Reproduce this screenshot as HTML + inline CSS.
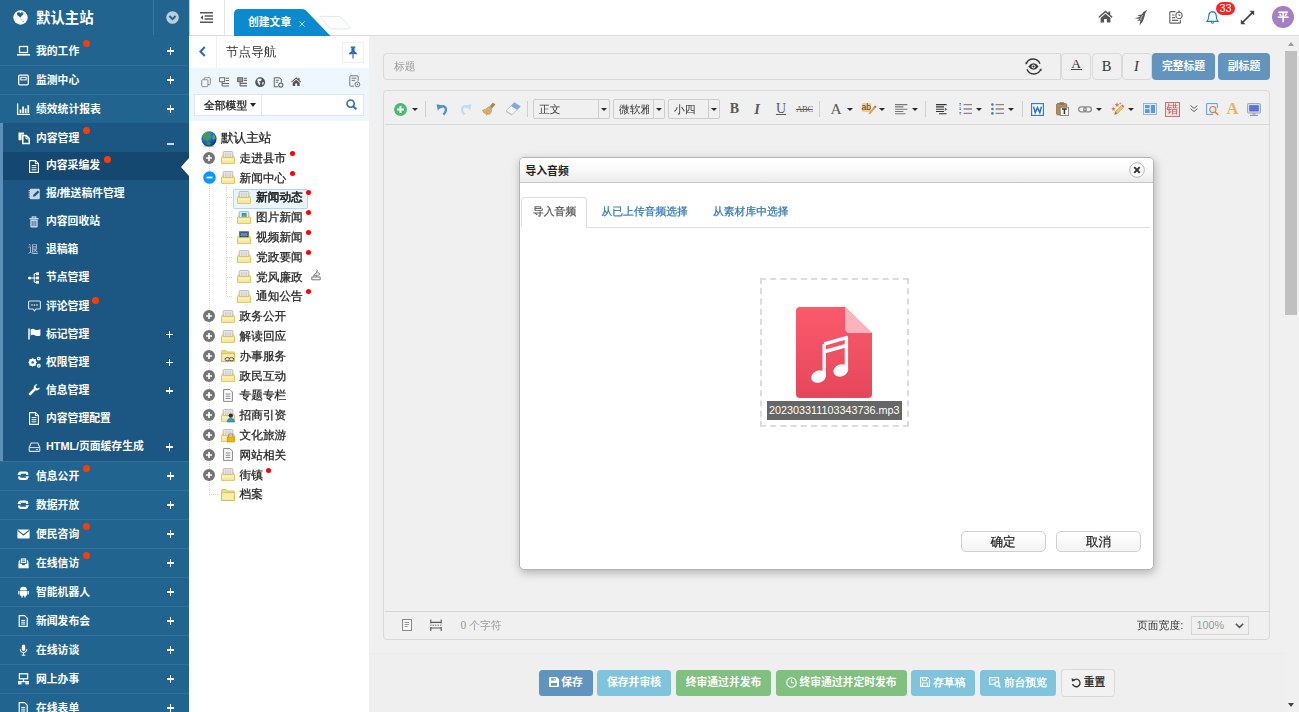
<!DOCTYPE html>
<html lang="zh-CN">
<head>
<meta charset="utf-8">
<title>创建文章</title>
<style>
*{box-sizing:border-box;margin:0;padding:0}
html,body{width:1299px;height:712px;overflow:hidden;background:#f0f0f0}
body{position:relative;font-family:"Liberation Sans","WenQuanYi Zen Hei",sans-serif;font-size:10.8px;color:#333}
.abs{position:absolute}
svg{display:block;overflow:visible;position:absolute}
.b{font-family:"Liberation Sans","Noto Sans CJK SC",sans-serif;font-weight:bold}
/* sidebar */
#side{position:absolute;left:0;top:0;width:189px;height:712px;background:#21648f;overflow:hidden}
#side .hd{position:absolute;left:0;top:0;width:189px;height:36px}
#side .hd .t{position:absolute;left:36px;top:8px;font-size:14.4px;line-height:20px;color:#fff;white-space:nowrap}
#side .hd .sep{position:absolute;left:153px;top:0;width:1px;height:35px;background:rgba(255,255,255,.12)}
.mi{position:absolute;left:0;width:189px;height:29px;border-top:1px solid rgba(255,255,255,.08);color:#fff}
.mi .tx,.si .tx{position:absolute;top:0;font-size:10.8px;white-space:nowrap;color:#fff}
.mi .tx{left:36px;line-height:28px}
.pl{position:absolute;left:166.800px;top:10.300px;width:7.400px;height:7.400px}
.pl:before{content:"";position:absolute;left:0;top:2.900px;width:7.400px;height:1.600px;background:#fff}
.pl:after{content:"";position:absolute;left:2.900px;top:0;width:1.600px;height:7.400px;background:#fff}
.mn{position:absolute;left:167px;top:19px;width:7px;height:1.600px;background:#c9d9e6}
.mi svg{left:17px;top:8px}
.si{position:absolute;left:0;width:186px;height:28.1px;color:#fff}
.si .tx{left:43px;line-height:27.400px}
.si svg{left:25px;top:7.500px}
.si .pl{left:163px}
.dot{position:absolute;width:7px;height:7px;border-radius:50%;background:#ff3d00}
#open{position:absolute;left:0;top:123px;width:189px;height:338px;background:#1b5782;border-left:3px solid #5c8fba}
#open .act{background:#154871}
/* top bar */
#top{position:absolute;left:189px;top:0;width:1110px;height:36px;background:#fff;border-bottom:1px solid #dcdcdc}
/* tree panel */
#tree{position:absolute;left:189px;top:36px;width:180px;height:676px;background:#fff}
.tr{position:absolute;left:0;height:20px;white-space:nowrap;font-size:11.7px;line-height:20px;color:#333}
.tr .tx{position:absolute;top:0}
.rd{position:absolute;width:5px;height:5px;border-radius:50%;background:#f00}
/* main */
#main{position:absolute;left:369px;top:36px;width:914px;height:676px;background:#f0f0f0}

</style>
</head>
<body>
<div id="side">
<div class="hd"><svg style="left:13px;top:10px" width="15" height="15" viewBox="0 0 15 15"><circle cx="7.5" cy="7.5" r="7.2" fill="#fff"/><path d="M4.400 2.400L6.200 2L7.200 3.200L8.600 2.200L10.400 2.600L10.200 4.400L8.400 6.200L7.600 7.800L6.200 6.600L4.600 5.600L3.800 3.800Z" fill="#21648f"/><path d="M7.400 8.400L8.600 9.400L8.200 10.200ZM9.200 10.600L10.800 11.400L10 12.200Z" fill="#21648f"/></svg><div class="t b">默认主站</div><div class="sep"></div><svg style="left:166px;top:11px" width="13" height="13" viewBox="0 0 13 13"><circle cx="6.500" cy="6.500" r="6.300" fill="#b9cfe0"/><path d="M3.400 5L6.500 8.200L9.600 5" fill="none" stroke="#21648f" stroke-width="1.900"/></svg></div>
<div class="mi" style="top:36px;border-top-color:transparent"><svg width="13" height="12" viewBox="0 0 13 12"><rect x="2.5" y="1.5" width="8" height="6" fill="none" stroke="#fff" stroke-width="1.3"/><rect x="0" y="9" width="13" height="1.6" fill="#fff"/></svg><div class="tx b">我的工作</div><div class="dot" style="left:83px;top:3px"></div><div class="pl"></div></div>
<div class="mi" style="top:65px"><svg width="13" height="12" viewBox="0 0 13 12"><rect x="1.7" y="1.2" width="9.6" height="9.6" rx="1" fill="none" stroke="#fff" stroke-width="1.3"/><rect x="3.8" y="3.3" width="5.4" height="2.6" fill="none" stroke="#fff" stroke-width="1"/></svg><div class="tx b">监测中心</div><div class="pl"></div></div>
<div class="mi" style="top:94px"><svg width="13" height="12" viewBox="0 0 13 12"><path d="M0.6 0.5V11.4H13" fill="none" stroke="#fff" stroke-width="1.3"/><rect x="2.6" y="6.5" width="1.7" height="3.6" fill="#fff"/><rect x="5.2" y="3.5" width="1.7" height="6.6" fill="#fff"/><rect x="7.8" y="5.5" width="1.7" height="4.6" fill="#fff"/><rect x="10.4" y="2.2" width="1.7" height="7.9" fill="#fff"/></svg><div class="tx b">绩效统计报表</div><div class="pl"></div></div>
<div id="open"></div>
<div class="mi" style="top:123px;border-top-color:transparent"><svg width="13" height="12" viewBox="0 0 13 12"><path d="M1.5 0.5H7V2.6H4.6V8.2H1.5Z" fill="#fff"/><path d="M5.8 3.6H9.4L12.2 6.4V11.6H5.8Z" fill="none" stroke="#fff" stroke-width="1.5"/><path d="M9 3.6V6.8H12.2" fill="none" stroke="#fff" stroke-width="1"/></svg><div class="tx b">内容管理</div><div class="dot" style="left:83px;top:3px"></div><div class="mn"></div></div>
<div class="si" style="left:3px;top:152px;background:#154871"><svg width="12" height="13" viewBox="0 0 12 13"><path d="M1.6 0.6H7.6L10.4 3.4V12.4H1.6Z" fill="none" stroke="#fff" stroke-width="1.1"/><path d="M7.4 0.8V3.6H10.2" fill="none" stroke="#fff" stroke-width="1"/><path d="M3.6 5.6H8.4M3.6 7.7H8.4M3.6 9.8H8.4" stroke="#fff" stroke-width="1"/></svg><div class="tx b">内容采编发</div><div class="dot" style="left:101px;top:4px"></div><div style="position:absolute;right:0;top:5.500px;width:0;height:0;border:9px solid transparent;border-right:8px solid #fff;border-left:0"></div></div>
<div class="si" style="left:3px;top:180.1px"><svg width="13" height="12" viewBox="0 0 13 12"><rect x="1.8" y="0.8" width="10" height="10.4" rx="1.2" fill="#c6d6e4"/><path d="M0.6 2.6H2.6M0.6 4.8H2.6M0.6 7H2.6M0.6 9.2H2.6" stroke="#c6d6e4" stroke-width="1"/><path d="M5 8.8L5.6 6.6L9.8 2.4L11.4 4L7.2 8.2Z" fill="#1b5782"/></svg><div class="tx b">报/推送稿件管理</div></div>
<div class="si" style="left:3px;top:208.2px"><svg width="12" height="12" viewBox="0 0 12 12"><path d="M1.4 2.6H10.6" stroke="#c6d6e4" stroke-width="1.3"/><path d="M4.2 2.4V0.9H7.8V2.4" fill="none" stroke="#c6d6e4" stroke-width="1.1"/><path d="M2.3 3.6H9.7V10.6Q9.7 11.6 8.7 11.6H3.3Q2.3 11.6 2.3 10.6Z" fill="#c6d6e4"/><path d="M4.2 5V10M6 5V10M7.8 5V10" stroke="#1b5782" stroke-width=".8"/></svg><div class="tx b">内容回收站</div></div>
<div class="si" style="left:3px;top:236.3px"><div style="position:absolute;left:25px;top:0;line-height:27.400px;font-size:10.800px;color:#c3d3e0">退</div><div class="tx b">退稿箱</div></div>
<div class="si" style="left:3px;top:264.4px"><svg width="12" height="12" viewBox="0 0 12 12"><circle cx="1.6" cy="6" r="1.6" fill="#fff"/><path d="M3 6H6.2M6.2 1.8V10.2M6.2 1.8H8M6.2 6H8M6.2 10.2H8" fill="none" stroke="#fff" stroke-width="1"/><rect x="8" y="0.4" width="3" height="2.8" fill="#fff"/><rect x="8" y="4.6" width="3" height="2.8" fill="#fff"/><rect x="8" y="8.8" width="3" height="2.8" fill="#fff"/></svg><div class="tx b">节点管理</div></div>
<div class="si" style="left:3px;top:292.5px"><svg width="13" height="12" viewBox="0 0 13 12"><path d="M1.6 1H11.4Q12.4 1 12.4 2V8Q12.4 9 11.4 9H8L6.5 10.8L5 9H1.6Q.6 9 .6 8V2Q.6 1 1.6 1Z" fill="none" stroke="#dbe6ef" stroke-width="1.1"/><circle cx="4" cy="5" r=".8" fill="#fff"/><circle cx="6.5" cy="5" r=".8" fill="#fff"/><circle cx="9" cy="5" r=".8" fill="#fff"/></svg><div class="tx b">评论管理</div><div class="dot" style="left:89px;top:4px"></div></div>
<div class="si" style="left:3px;top:320.6px"><svg width="13" height="12" viewBox="0 0 13 12"><path d="M1 0.4V11.6" stroke="#fff" stroke-width="1.5"/><path d="M2.6 1.4Q4.6 0.2 6.8 1.4T12.4 1.2V7.4Q9.6 8.6 7.2 7.4T2.6 7.6Z" fill="#fff"/></svg><div class="tx b">标记管理</div><div class="pl"></div></div>
<div class="si" style="left:3px;top:348.7px"><svg width="13" height="12" viewBox="0 0 13 12"><circle cx="4.6" cy="6.4" r="2.6" fill="none" stroke="#fff" stroke-width="2"/><path d="M4.6 2.2V10.6M.4 6.4H8.8M1.6 3.4L7.6 9.4M7.6 3.4L1.6 9.4" stroke="#fff" stroke-width="1.3"/><circle cx="4.6" cy="6.4" r="1.2" fill="#1b5782"/><circle cx="10.8" cy="2.6" r="1.3" fill="none" stroke="#fff" stroke-width="1.3"/><circle cx="10.8" cy="9.8" r="1.3" fill="none" stroke="#fff" stroke-width="1.3"/></svg><div class="tx b">权限管理</div><div class="pl"></div></div>
<div class="si" style="left:3px;top:376.8px"><svg width="13" height="12" viewBox="0 0 13 12"><path d="M11.8 3.4A3.2 3.2 0 0 1 7.6 6.2L3 10.9A1.3 1.3 0 0 1 1.1 9L5.8 4.4A3.2 3.2 0 0 1 9.4 .4L7.6 2.2L8.1 3.9L9.8 4.4Z" fill="#fff"/></svg><div class="tx b">信息管理</div><div class="pl"></div></div>
<div class="si" style="left:3px;top:404.9px"><svg width="12" height="13" viewBox="0 0 12 13"><path d="M1.6 0.6H7.6L10.4 3.4V12.4H1.6Z" fill="none" stroke="#fff" stroke-width="1.1"/><path d="M7.4 0.8V3.6H10.2" fill="none" stroke="#fff" stroke-width="1"/><path d="M3.6 5.6H8.4M3.6 7.7H8.4M3.6 9.8H8.4" stroke="#fff" stroke-width="1"/></svg><div class="tx b">内容管理配置</div></div>
<div class="si" style="left:3px;top:433px"><svg width="13" height="12" viewBox="0 0 13 12"><path d="M3.200 2H9.800L11.800 6.400V9.400Q11.800 10.400 10.800 10.400H2.200Q1.200 10.400 1.200 9.400V6.400Z" fill="none" stroke="#dbe6ef" stroke-width="1.100" stroke-linejoin="round"/><path d="M1.400 6.600H11.600" stroke="#dbe6ef" stroke-width="1"/><path d="M8 8.500H10" stroke="#dbe6ef" stroke-width=".9"/></svg><div class="tx b">HTML/页面缓存生成</div><div class="pl"></div></div>
<div class="mi" style="top:461px"><svg width="13" height="12" viewBox="0 0 13 12"><rect x="2.200" y="2.600" width="8" height="6.200" rx="1.300" fill="none" stroke="#fff" stroke-width="2.300"/><path d="M0 5.700H3.600M8.800 5.700H12.400" stroke="#21648f" stroke-width="1.500"/><path d="M.2 4.900L2.200 3L4.200 4.900ZM8.200 6.500L10.200 8.400L12.200 6.500Z" fill="#fff"/></svg><div class="tx b">信息公开</div><div class="dot" style="left:83px;top:3px"></div><div class="pl"></div></div>
<div class="mi" style="top:490px"><svg width="13" height="12" viewBox="0 0 13 12"><rect x="2.200" y="2.600" width="8" height="6.200" rx="1.300" fill="none" stroke="#fff" stroke-width="2.300"/><path d="M0 5.700H3.600M8.800 5.700H12.400" stroke="#21648f" stroke-width="1.500"/><path d="M.2 4.900L2.200 3L4.200 4.900ZM8.200 6.500L10.200 8.400L12.200 6.500Z" fill="#fff"/></svg><div class="tx b">数据开放</div><div class="pl"></div></div>
<div class="mi" style="top:519px"><svg width="13" height="12" viewBox="0 0 13 12"><rect x=".4" y="1.4" width="12.2" height="9.2" rx="1" fill="#fff"/><path d="M.8 2.4L6.5 7L12.2 2.4" fill="none" stroke="#21648f" stroke-width="1.1"/></svg><div class="tx b">便民咨询</div><div class="dot" style="left:83px;top:3px"></div><div class="pl"></div></div>
<div class="mi" style="top:548px"><svg width="13" height="12" viewBox="0 0 13 12"><path d="M3.800 1.400H9.200V6H3.800Z" fill="#fff"/><path d="M4.800 3H8.200M4.800 4.600H8.200" stroke="#21648f" stroke-width=".8"/><path d="M2.600 3.400L2 6.800V10.600H11V6.800L10.400 3.400" fill="none" stroke="#fff" stroke-width="1.200"/><path d="M2 6.800H4.600L5.400 8.200H7.600L8.400 6.800H11V10.600H2Z" fill="#fff"/></svg><div class="tx b">在线信访</div><div class="dot" style="left:83px;top:3px"></div><div class="pl"></div></div>
<div class="mi" style="top:577px"><svg width="13" height="12" viewBox="0 0 13 12"><path d="M3 4.2A3.5 3.4 0 0 1 10 4.2Z" fill="#fff"/><rect x="3" y="4.8" width="7" height="5" rx=".8" fill="#fff"/><rect x="1.2" y="4.8" width="1.3" height="3.8" rx=".6" fill="#fff"/><rect x="10.5" y="4.8" width="1.3" height="3.8" rx=".6" fill="#fff"/><rect x="4.3" y="9" width="1.4" height="2.6" rx=".6" fill="#fff"/><rect x="7.3" y="9" width="1.4" height="2.6" rx=".6" fill="#fff"/></svg><div class="tx b">智能机器人</div><div class="pl"></div></div>
<div class="mi" style="top:606px"><svg width="13" height="12" viewBox="0 0 13 12"><path d="M2.2 .6H7.6L10.2 3.2V11.4H2.2Z" fill="none" stroke="#fff" stroke-width="1.2"/><path d="M4.2 5.4H8.2M4.2 7.2H8.2M4.2 9H8.2" stroke="#fff" stroke-width="1"/></svg><div class="tx b">新闻发布会</div><div class="pl"></div></div>
<div class="mi" style="top:635px"><svg width="13" height="12" viewBox="0 0 13 12"><rect x="4.8" y=".4" width="3.4" height="6.6" rx="1.7" fill="#fff"/><path d="M3.2 5.2Q3.2 8.6 6.5 8.6T9.8 5.2M6.5 8.6V11M4.6 11.2H8.4" fill="none" stroke="#fff" stroke-width="1"/></svg><div class="tx b">在线访谈</div><div class="pl"></div></div>
<div class="mi" style="top:664px"><svg width="13" height="12" viewBox="0 0 13 12"><rect x="2.4" y=".8" width="8.2" height="5" fill="none" stroke="#fff" stroke-width="1.3"/><path d="M6.5 6V8.4M1 8.6H12" stroke="#fff" stroke-width="1.2"/><rect x="1" y="9.2" width="3.6" height="2.2" fill="#fff"/><rect x="8.4" y="9.2" width="3.6" height="2.2" fill="#fff"/></svg><div class="tx b">网上办事</div><div class="pl"></div></div>
<div class="mi" style="top:693px"><svg width="13" height="12" viewBox="0 0 13 12"><path d="M2.2 .6H7.6L10.2 3.2V11.4H2.2Z" fill="none" stroke="#fff" stroke-width="1.2"/><path d="M4.2 5.4H8.2M4.2 7.2H8.2M4.2 9H8.2" stroke="#fff" stroke-width="1"/></svg><div class="tx b">在线表单</div><div class="pl"></div></div>
</div>
<div id="top">
 <svg style="left:11px;top:12px" width="13" height="11" viewBox="0 0 13 11"><path d="M0 .8H13M4.6 4H13M4.6 7H13M0 10.2H13" stroke="#555" stroke-width="1.4"/><path d="M3 3.2V7.8L.4 5.5Z" fill="#555"/></svg>
 <div class="abs" style="left:35px;top:0;width:1px;height:35px;background:#e4e4e4"></div>
 <svg style="left:45px;top:9px" width="98" height="27" viewBox="0 0 98 27"><path d="M0 27V5Q0 0 5 0H68.5Q70.5 0 72 1.6L96.5 27Z" fill="#0b8acf"/><path d="M86 7.400H104.500Q106 7.400 107 8.400L114.500 16.400Q117.500 20 113 20H98.500Q97 20 95.500 18.600L88 10.400Q85 7.400 89 7.400Z" fill="#fbfdff" stroke="#dcebf7" stroke-width="1"/></svg>
 <div class="abs b" style="left:59px;top:13px;line-height:18px;font-size:10.8px;color:#fff;white-space:nowrap">创建文章</div>
 <svg style="left:110px;top:20.500px" width="6" height="6" viewBox="0 0 7 7"><path d="M.5 .5L6.500 6.500M6.500 .5L.5 6.500" stroke="#d6ecf8" stroke-width="1"/></svg>
 <!-- right icons -->
 <svg style="left:908.500px;top:10px" width="15" height="13" viewBox="0 0 15 13"><path d="M7.500 .6L.4 6.800L1.300 7.800L7.500 2.600L13.700 7.800L14.600 6.800L12.200 4.700V1.400H10.400V3.100Z" fill="#555"/><path d="M7.500 3.800L2.600 7.900V12.600H6.100V9H8.900V12.600H12.400V7.900Z" fill="#555"/></svg>
 <svg style="left:945px;top:9px" width="14" height="17" viewBox="0 0 14 17"><path d="M13.400 .4Q9.500 2.200 7.600 5.600L3.400 6.200L6.400 7.600L.6 9.600L5.800 9.800L3 12L6.400 11.600L5.600 16.400Q9.800 12 10.600 7.200Q11.200 3.200 13.400 .4Z" fill="#555"/><path d="M8.800 6.200Q6.500 8.500 6.800 11" stroke="#fff" stroke-width=".7" fill="none"/></svg>
 <svg style="left:980px;top:10px" width="14" height="14" viewBox="0 0 14 14"><path d="M6.500 1.600H1.600Q.8 1.600 .8 2.400V12.400Q.8 13.200 1.600 13.200H10.600Q11.400 13.200 11.400 12.400V9.800" fill="none" stroke="#666" stroke-width="1.200"/><path d="M3 5H5.600M3 7.600H6.200M3 10.400H9.200" stroke="#666" stroke-width="1.100"/><circle cx="10" cy="5.400" r="3.100" fill="none" stroke="#666" stroke-width="1.100"/><path d="M10 3.800V5.600H11.400M9 1.200H11" stroke="#666" stroke-width="1" fill="none"/></svg>
 <svg style="left:1017px;top:9.500px" width="13" height="15" viewBox="0 0 15 16"><path d="M7.500 1.200Q3.300 1.600 3.100 6.600Q3.100 10.400 1.200 12.400H13.800Q11.900 10.400 11.900 6.600Q11.700 1.600 7.500 1.200Z" fill="none" stroke="#1a7fc6" stroke-width="1.300"/><path d="M5.900 13.600Q7.500 15.600 9.100 13.600" fill="none" stroke="#1a7fc6" stroke-width="1.200"/></svg>
 <div class="abs" style="left:1027px;top:2px;width:19px;height:13px;border-radius:7px;background:#f8222a;color:#fff;font-size:10.8px;line-height:13px;text-align:center;font-family:'Liberation Sans',sans-serif">33</div>
 <svg style="left:1051px;top:10px" width="15" height="15" viewBox="0 0 15 15"><path d="M2.400 12.600L12.600 2.400" stroke="#444" stroke-width="1.700"/><path d="M9.400 .8H14.200V5.600Z" fill="#444"/><path d="M5.600 14.200H.8V9.400Z" fill="#444"/></svg>
 <div class="abs" style="left:1083px;top:6px;width:22px;height:22px;border-radius:50%;background:#a47fc2"></div>
 <div class="abs b" style="left:1083px;top:6px;width:22px;line-height:22px;text-align:center;color:#fff;font-size:11.700px">平</div>
</div>

<div id="edge" class="abs" style="left:189px;top:0;width:1px;height:712px;background:#bccfde"></div>
<div class="abs" style="left:189px;top:123px;width:1px;height:338px;background:#b5c8d8"></div>

<div id="tree">
<svg style="left:10px;top:10px" width="7" height="11" viewBox="0 0 7 11"><path d="M5.800 1L1.400 5.500L5.800 10" fill="none" stroke="#2a6db5" stroke-width="2"/></svg>
<div class="abs" style="left:27px;top:0;width:1px;height:32px;background:#eef1f4"></div>
<div class="abs" style="left:37px;top:6px;font-size:12.600px;line-height:20px;color:#333;white-space:nowrap">节点导航</div>
<div class="abs" style="left:153px;top:5.500px;width:21.500px;height:21.500px;border:1px solid #eaf0f5;background:#fff"></div>
<svg style="left:159px;top:10px" width="10" height="13" viewBox="0 0 10 13"><path d="M2.600 .4H7.400V1.400L6.600 2V5.200Q9 6.200 9.200 8.200H.8Q1 6.200 3.400 5.200V2L2.600 1.400Z" fill="#2a6db5"/><path d="M5 8.200V12.600" stroke="#2a6db5" stroke-width="1.200"/></svg>
<div class="abs" style="left:0;top:32px;width:180px;height:53px;background:#eef7fd"></div>
<svg style="left:11.8px;top:40.6px" width="10.400" height="10.400" viewBox="0 0 11.400 11.400"><rect x="3.400" y=".8" width="6.800" height="7.600" rx="1" fill="#eef7fd" stroke="#777" stroke-width=".9"/><rect x=".8" y="3" width="6.800" height="7.600" rx="1" fill="#eef7fd" stroke="#777" stroke-width=".9"/></svg>
<svg style="left:30.3px;top:40.6px" width="10.400" height="10.400" viewBox="0 0 11.400 11.400"><rect x=".6" y=".8" width="5.600" height="4.400" fill="none" stroke="#666" stroke-width="1"/><path d="M7.400 1.400H11M7.400 3.800H11M3.400 5.200V9.800M3.400 7H11M3.400 9.800H11" stroke="#666" stroke-width="1.100" fill="none"/></svg>
<svg style="left:48.3px;top:40.6px" width="10.400" height="10.400" viewBox="0 0 11.400 11.400"><rect x=".6" y=".8" width="5.600" height="4.400" fill="#999" stroke="#666" stroke-width="1"/><path d="M7.400 1.400H11M7.400 3.800H11M3.400 5.200V9.800M3.400 7H11M3.400 9.800H11" stroke="#666" stroke-width="1.300" fill="none"/></svg>
<svg style="left:66.3px;top:40.6px" width="10.400" height="10.400" viewBox="0 0 11.400 11.400"><circle cx="5.700" cy="5.700" r="5.400" fill="#555"/><path d="M4.400 1.600L6.800 2L7.400 3.400L6 4.600L5 4.400L4.600 5.400L5.800 6.400L5.400 8.200L4.400 9.400L4 7.400L2.800 6.200L3 4.200L2 3.600Q2.800 2.200 4.400 1.600ZM8.400 5.400L9.800 5.800Q9.600 7.800 8 9L7.800 7.200Z" fill="#eef7fd"/></svg>
<svg style="left:84.3px;top:40.6px" width="10.400" height="10.400" viewBox="0 0 11.400 11.400"><path d="M1.400 .8H7L9.200 3V6M5.600 10.600H1.400V.8" fill="none" stroke="#666" stroke-width="1.100"/><path d="M3 3.600H6.600M3 5.800H5.600" stroke="#666" stroke-width="1"/><circle cx="8.600" cy="8.800" r="2.300" fill="none" stroke="#555" stroke-width="1.100"/></svg>
<svg style="left:102.3px;top:40.6px" width="10.400" height="10.400" viewBox="0 0 11.400 11.400"><path d="M5.700 .4L.2 5.200L.9 6L5.700 2L10.500 6L11.200 5.200L9.400 3.600V1H8V2.400Z" fill="#555"/><path d="M5.700 3L1.900 6.200V10H4.600V7.200H6.800V10H9.500V6.200Z" fill="#555"/></svg>
<svg style="left:160px;top:39.4px" width="11.4" height="12.4" viewBox="0 0 11.4 12.4"><path d="M9.200 6V1.600Q9.200 .8 8.400 .8H1.600Q.8 .8 .8 1.600V10.400Q.8 11.200 1.600 11.200H5" fill="none" stroke="#777" stroke-width="1"/><path d="M2.600 3.200H7.400M2.600 5.400H6" stroke="#777" stroke-width="1"/><circle cx="8.400" cy="9.400" r="2.400" fill="none" stroke="#777" stroke-width="1"/><circle cx="8.400" cy="9.400" r=".8" fill="#777"/></svg>
<div class="abs" style="left:5px;top:57.500px;width:170px;height:22.500px;background:#fff;border:1px solid #dfe6ec"></div>
<div class="abs" style="left:72px;top:57.500px;width:1px;height:22.500px;background:#dfe6ec"></div>
<div class="abs" style="left:15px;top:59px;font-size:10.800px;line-height:20px;color:#222;-webkit-text-stroke:.3px #222;white-space:nowrap">全部模型</div>
<div class="abs" style="left:60.500px;top:67px;width:0;height:0;border:3.800px solid transparent;border-top:4.200px solid #222;border-bottom:0"></div>
<svg style="left:157px;top:63px" width="11" height="11" viewBox="0 0 11 11"><circle cx="4.600" cy="4.600" r="3.600" fill="none" stroke="#2a6db5" stroke-width="1.600"/><path d="M7.200 7.200L10.400 10.400" stroke="#2a6db5" stroke-width="2"/></svg>
<div class="abs" style="left:20px;top:110px;width:1px;height:348.4px;background:repeating-linear-gradient(to bottom,#d4d4d4 0,#d4d4d4 1px,transparent 1px,transparent 2px)"></div>
<div class="abs" style="left:20px;top:458.4px;height:1px;width:10px;background:repeating-linear-gradient(to right,#d4d4d4 0,#d4d4d4 1px,transparent 1px,transparent 2px)"></div>
<div class="abs" style="left:37px;top:150.6px;width:1px;height:109.8px;background:repeating-linear-gradient(to bottom,#d4d4d4 0,#d4d4d4 1px,transparent 1px,transparent 2px)"></div>
<div class="abs" style="left:38px;top:161.4px;height:1px;width:6px;background:repeating-linear-gradient(to right,#d4d4d4 0,#d4d4d4 1px,transparent 1px,transparent 2px)"></div>
<div class="abs" style="left:38px;top:181.2px;height:1px;width:6px;background:repeating-linear-gradient(to right,#d4d4d4 0,#d4d4d4 1px,transparent 1px,transparent 2px)"></div>
<div class="abs" style="left:38px;top:201px;height:1px;width:6px;background:repeating-linear-gradient(to right,#d4d4d4 0,#d4d4d4 1px,transparent 1px,transparent 2px)"></div>
<div class="abs" style="left:38px;top:220.8px;height:1px;width:6px;background:repeating-linear-gradient(to right,#d4d4d4 0,#d4d4d4 1px,transparent 1px,transparent 2px)"></div>
<div class="abs" style="left:38px;top:240.6px;height:1px;width:6px;background:repeating-linear-gradient(to right,#d4d4d4 0,#d4d4d4 1px,transparent 1px,transparent 2px)"></div>
<div class="abs" style="left:38px;top:260.4px;height:1px;width:6px;background:repeating-linear-gradient(to right,#d4d4d4 0,#d4d4d4 1px,transparent 1px,transparent 2px)"></div>
<svg style="left:12px;top:95px" width="16" height="16" viewBox="0 0 16 16"><defs><radialGradient id="gl" cx=".35" cy=".3" r=".8"><stop offset="0" stop-color="#5aa6f0"/><stop offset=".6" stop-color="#1659c0"/><stop offset="1" stop-color="#0a2f80"/></radialGradient></defs><ellipse cx="8" cy="15" rx="5.500" ry="1" fill="#bbb"/><circle cx="8" cy="7.800" r="7.600" fill="url(#gl)"/><path d="M3 3.400Q5.600 1 8.400 1.600L9.400 3.400L7.400 5.600L8.600 7.800L6.600 10.200L4.600 8.200L3.400 8.600L1.800 6.200Z" fill="#3da33a"/><path d="M11.400 2.600Q14.400 4.400 14.600 7.600L12.600 9L11 6.600L12 4.600Z" fill="#4bb040"/><path d="M4.600 11.400L7.600 11L10 12.600L8.600 14.600Q6 14.400 4.600 11.400Z" fill="#2e9a36"/></svg>
<div class="abs" style="left:32px;top:92px;font-size:12.600px;line-height:20px;white-space:nowrap;color:#222;-webkit-text-stroke:.25px #222">默认主站</div>
<svg style="left:14.2px;top:115.8px" width="12" height="12" viewBox="0 0 12 12"><circle cx="6" cy="6" r="6" fill="#747474"/><path d="M3 6H9M6 3V9" stroke="#fff" stroke-width="1.700"/></svg>
<svg style="left:32px;top:115.3px" width="14" height="13" viewBox="0 0 14 13"><path d="M2.2 6.500V1.400Q2.200 .6 3 .6H11Q11.800 .6 11.800 1.400V6.500Z" fill="#f6f6f6" stroke="#a8a8a8" stroke-width=".8"/><path d="M4.200 1.600V6M6 1.600V6M8 1.600V6M9.800 1.600V6" stroke="#b4b4b4" stroke-width=".8"/><path d="M.5 6.600L2 4.600V6.600H12V4.600L13.500 6.600V12.400H.5Z" fill="#f7eaa6" stroke="#dcbf55" stroke-width=".9" stroke-linejoin="round"/><path d="M1 8.200H13" stroke="#fdf6cf" stroke-width="1"/></svg>
<div class="abs" style="left:50.5px;top:111.8px;font-size:11.700px;line-height:20px;white-space:nowrap;color:#222;-webkit-text-stroke:.25px #222">走进县市</div>
<div class="rd" style="left:100.8px;top:114.8px"></div>
<svg style="left:13.7px;top:135.1px" width="13" height="13" viewBox="0 0 13 13"><circle cx="6.500" cy="6.500" r="6.300" fill="#0d96fb"/><path d="M3.500 6.500H9.500" stroke="#fff" stroke-width="1.700"/></svg>
<svg style="left:32px;top:135.1px" width="14" height="13" viewBox="0 0 14 13"><path d="M2.2 6.500V1.400Q2.200 .6 3 .6H11Q11.800 .6 11.800 1.400V6.500Z" fill="#f6f6f6" stroke="#a8a8a8" stroke-width=".8"/><path d="M4.200 1.600V6M6 1.600V6M8 1.600V6M9.800 1.600V6" stroke="#b4b4b4" stroke-width=".8"/><path d="M.5 6.600L2 4.600V6.600H12V4.600L13.500 6.600V12.400H.5Z" fill="#f7eaa6" stroke="#dcbf55" stroke-width=".9" stroke-linejoin="round"/><path d="M1 8.200H13" stroke="#fdf6cf" stroke-width="1"/></svg>
<div class="abs" style="left:50.5px;top:131.6px;font-size:11.700px;line-height:20px;white-space:nowrap;color:#222;-webkit-text-stroke:.25px #222">新闻中心</div>
<div class="rd" style="left:100.8px;top:134.6px"></div>
<div class="abs" style="left:44px;top:153.1px;width:75px;height:20px;background:#eaf4fb;border:1.300px solid #abd8f3;border-radius:1.500px"></div>
<svg style="left:48px;top:154.9px" width="14" height="13" viewBox="0 0 14 13"><path d="M2.2 6.500V1.400Q2.200 .6 3 .6H11Q11.800 .6 11.800 1.400V6.500Z" fill="#f6f6f6" stroke="#a8a8a8" stroke-width=".8"/><path d="M4.200 1.600V6M6 1.600V6M8 1.600V6M9.800 1.600V6" stroke="#b4b4b4" stroke-width=".8"/><path d="M.5 6.600L2 4.600V6.600H12V4.600L13.500 6.600V12.400H.5Z" fill="#f7eaa6" stroke="#dcbf55" stroke-width=".9" stroke-linejoin="round"/><path d="M1 8.200H13" stroke="#fdf6cf" stroke-width="1"/></svg>
<div class="abs" style="left:67px;top:151.4px;font-size:11.700px;line-height:20px;white-space:nowrap;color:#222;-webkit-text-stroke:.55px #222">新闻动态</div>
<div class="rd" style="left:117.3px;top:154.4px"></div>
<svg style="left:48px;top:174.7px" width="14" height="13" viewBox="0 0 14 13"><path d="M2.2 6.500V1.400Q2.200 .6 3 .6H11Q11.800 .6 11.800 1.400V6.500Z" fill="#dfeefa" stroke="#8aa4bd" stroke-width=".8"/><rect x="4.600" y="2" width="5" height="4" fill="#3f8fd6"/><path d="M4.600 6L6.600 3.600L8 5L9.600 4V6Z" fill="#6fbf4a"/><path d="M.5 6.600L2 4.600V6.600H12V4.600L13.500 6.600V12.400H.5Z" fill="#f7eaa6" stroke="#dcbf55" stroke-width=".9" stroke-linejoin="round"/><path d="M1 8.200H13" stroke="#fdf6cf" stroke-width="1"/></svg>
<div class="abs" style="left:67px;top:171.2px;font-size:11.700px;line-height:20px;white-space:nowrap;color:#222;-webkit-text-stroke:.25px #222">图片新闻</div>
<div class="rd" style="left:117.3px;top:174.2px"></div>
<svg style="left:48px;top:194.5px" width="14" height="13" viewBox="0 0 14 13"><rect x="2.200" y=".4" width="9.600" height="6.400" fill="#333"/><rect x="3.800" y="1.600" width="6.400" height="3.800" fill="#4f8fd9"/><path d="M2.800 1.200H3.400M2.800 2.800H3.400M2.800 4.400H3.400M10.600 1.200H11.200M10.600 2.800H11.200M10.600 4.400H11.200" stroke="#fff" stroke-width=".7"/><path d="M.5 6.600L2 4.600V6.600H12V4.600L13.500 6.600V12.400H.5Z" fill="#f7eaa6" stroke="#dcbf55" stroke-width=".9" stroke-linejoin="round"/><path d="M1 8.200H13" stroke="#fdf6cf" stroke-width="1"/></svg>
<div class="abs" style="left:67px;top:191px;font-size:11.700px;line-height:20px;white-space:nowrap;color:#222;-webkit-text-stroke:.25px #222">视频新闻</div>
<div class="rd" style="left:117.3px;top:194px"></div>
<svg style="left:48px;top:214.3px" width="14" height="13" viewBox="0 0 14 13"><path d="M2.2 6.500V1.400Q2.200 .6 3 .6H11Q11.800 .6 11.800 1.400V6.500Z" fill="#f6f6f6" stroke="#a8a8a8" stroke-width=".8"/><path d="M4.200 1.600V6M6 1.600V6M8 1.600V6M9.800 1.600V6" stroke="#b4b4b4" stroke-width=".8"/><path d="M.5 6.600L2 4.600V6.600H12V4.600L13.500 6.600V12.400H.5Z" fill="#f7eaa6" stroke="#dcbf55" stroke-width=".9" stroke-linejoin="round"/><path d="M1 8.200H13" stroke="#fdf6cf" stroke-width="1"/></svg>
<div class="abs" style="left:67px;top:210.8px;font-size:11.700px;line-height:20px;white-space:nowrap;color:#222;-webkit-text-stroke:.25px #222">党政要闻</div>
<div class="rd" style="left:117.3px;top:213.8px"></div>
<svg style="left:48px;top:234.1px" width="14" height="13" viewBox="0 0 14 13"><path d="M2.2 6.500V1.400Q2.200 .6 3 .6H11Q11.800 .6 11.800 1.400V6.500Z" fill="#f6f6f6" stroke="#a8a8a8" stroke-width=".8"/><path d="M4.200 1.600V6M6 1.600V6M8 1.600V6M9.800 1.600V6" stroke="#b4b4b4" stroke-width=".8"/><path d="M.5 6.600L2 4.600V6.600H12V4.600L13.500 6.600V12.400H.5Z" fill="#f7eaa6" stroke="#dcbf55" stroke-width=".9" stroke-linejoin="round"/><path d="M1 8.200H13" stroke="#fdf6cf" stroke-width="1"/></svg>
<div class="abs" style="left:67px;top:230.6px;font-size:11.700px;line-height:20px;white-space:nowrap;color:#222;-webkit-text-stroke:.25px #222">党风廉政</div>
<svg style="left:122.3px;top:233.1px" width="10" height="11.4" viewBox="0 0 10 11.4"><path d="M.8 8V10.800H9.200V8M.8 8H9.200" fill="none" stroke="#777" stroke-width="1"/><path d="M2.400 7.400Q3 4.400 5.600 4V2.200L9 5L5.600 7.600V6Q3.800 6 2.400 7.400Z" fill="#f4f4f4" stroke="#777" stroke-width=".9" stroke-linejoin="round"/><path d="M5.400 .6L7 1.800" stroke="#777" stroke-width=".8"/></svg>
<svg style="left:48px;top:253.9px" width="14" height="13" viewBox="0 0 14 13"><path d="M2.2 6.500V1.400Q2.200 .6 3 .6H11Q11.800 .6 11.800 1.400V6.500Z" fill="#f6f6f6" stroke="#a8a8a8" stroke-width=".8"/><path d="M4.200 1.600V6M6 1.600V6M8 1.600V6M9.800 1.600V6" stroke="#b4b4b4" stroke-width=".8"/><path d="M.5 6.600L2 4.600V6.600H12V4.600L13.500 6.600V12.400H.5Z" fill="#f7eaa6" stroke="#dcbf55" stroke-width=".9" stroke-linejoin="round"/><path d="M1 8.200H13" stroke="#fdf6cf" stroke-width="1"/></svg>
<div class="abs" style="left:67px;top:250.4px;font-size:11.700px;line-height:20px;white-space:nowrap;color:#222;-webkit-text-stroke:.25px #222">通知公告</div>
<div class="rd" style="left:117.3px;top:253.4px"></div>
<svg style="left:14.2px;top:274.2px" width="12" height="12" viewBox="0 0 12 12"><circle cx="6" cy="6" r="6" fill="#747474"/><path d="M3 6H9M6 3V9" stroke="#fff" stroke-width="1.700"/></svg>
<svg style="left:32px;top:273.7px" width="14" height="13" viewBox="0 0 14 13"><path d="M2.2 6.500V1.400Q2.200 .6 3 .6H11Q11.800 .6 11.800 1.400V6.500Z" fill="#f6f6f6" stroke="#a8a8a8" stroke-width=".8"/><path d="M4.200 1.600V6M6 1.600V6M8 1.600V6M9.800 1.600V6" stroke="#b4b4b4" stroke-width=".8"/><path d="M.5 6.600L2 4.600V6.600H12V4.600L13.500 6.600V12.400H.5Z" fill="#f7eaa6" stroke="#dcbf55" stroke-width=".9" stroke-linejoin="round"/><path d="M1 8.200H13" stroke="#fdf6cf" stroke-width="1"/></svg>
<div class="abs" style="left:50.5px;top:270.2px;font-size:11.700px;line-height:20px;white-space:nowrap;color:#222;-webkit-text-stroke:.25px #222">政务公开</div>
<svg style="left:14.2px;top:294px" width="12" height="12" viewBox="0 0 12 12"><circle cx="6" cy="6" r="6" fill="#747474"/><path d="M3 6H9M6 3V9" stroke="#fff" stroke-width="1.700"/></svg>
<svg style="left:32px;top:293.5px" width="14" height="13" viewBox="0 0 14 13"><path d="M2.2 6.500V1.400Q2.200 .6 3 .6H11Q11.800 .6 11.800 1.400V6.500Z" fill="#f6f6f6" stroke="#a8a8a8" stroke-width=".8"/><path d="M4.200 1.600V6M6 1.600V6M8 1.600V6M9.800 1.600V6" stroke="#b4b4b4" stroke-width=".8"/><path d="M.5 6.600L2 4.600V6.600H12V4.600L13.500 6.600V12.400H.5Z" fill="#f7eaa6" stroke="#dcbf55" stroke-width=".9" stroke-linejoin="round"/><path d="M1 8.200H13" stroke="#fdf6cf" stroke-width="1"/></svg>
<div class="abs" style="left:50.5px;top:290px;font-size:11.700px;line-height:20px;white-space:nowrap;color:#222;-webkit-text-stroke:.25px #222">解读回应</div>
<svg style="left:14.2px;top:313.8px" width="12" height="12" viewBox="0 0 12 12"><circle cx="6" cy="6" r="6" fill="#747474"/><path d="M3 6H9M6 3V9" stroke="#fff" stroke-width="1.700"/></svg>
<svg style="left:32px;top:313.3px" width="14" height="13" viewBox="0 0 14 13"><path d="M.6 2.400Q.6 1.600 1.400 1.600H5L6.200 3H12.600Q13.400 3 13.400 3.800V12.400H.6Z" fill="#f3dd85" stroke="#d9bb4e" stroke-width=".9"/><path d="M.6 4.600H13.400V12.400H.6Z" fill="#faedb0" stroke="#d9bb4e" stroke-width=".9"/><ellipse cx="6.400" cy="10.200" rx="2.400" ry="1.600" fill="#eee" stroke="#555" stroke-width="1"/><ellipse cx="10.400" cy="10.200" rx="2.400" ry="1.600" fill="#eee" stroke="#555" stroke-width="1"/></svg>
<div class="abs" style="left:50.5px;top:309.8px;font-size:11.700px;line-height:20px;white-space:nowrap;color:#222;-webkit-text-stroke:.25px #222">办事服务</div>
<svg style="left:14.2px;top:333.6px" width="12" height="12" viewBox="0 0 12 12"><circle cx="6" cy="6" r="6" fill="#747474"/><path d="M3 6H9M6 3V9" stroke="#fff" stroke-width="1.700"/></svg>
<svg style="left:32px;top:333.1px" width="14" height="13" viewBox="0 0 14 13"><path d="M2.2 6.500V1.400Q2.200 .6 3 .6H11Q11.800 .6 11.800 1.400V6.500Z" fill="#f6f6f6" stroke="#a8a8a8" stroke-width=".8"/><path d="M4.200 1.600V6M6 1.600V6M8 1.600V6M9.800 1.600V6" stroke="#b4b4b4" stroke-width=".8"/><path d="M.5 6.600L2 4.600V6.600H12V4.600L13.500 6.600V12.400H.5Z" fill="#f7eaa6" stroke="#dcbf55" stroke-width=".9" stroke-linejoin="round"/><path d="M1 8.200H13" stroke="#fdf6cf" stroke-width="1"/></svg>
<div class="abs" style="left:50.5px;top:329.6px;font-size:11.700px;line-height:20px;white-space:nowrap;color:#222;-webkit-text-stroke:.25px #222">政民互动</div>
<svg style="left:14.2px;top:353.4px" width="12" height="12" viewBox="0 0 12 12"><circle cx="6" cy="6" r="6" fill="#747474"/><path d="M3 6H9M6 3V9" stroke="#fff" stroke-width="1.700"/></svg>
<svg style="left:32px;top:352.9px" width="14" height="13" viewBox="0 0 14 13"><path d="M2.600 .6H9L11.400 3V12.400H2.600Z" fill="#fff" stroke="#777" stroke-width=".9"/><path d="M4.600 5H9.400M4.600 7.200H9.400M4.600 9.400H9.400" stroke="#777" stroke-width=".9"/></svg>
<div class="abs" style="left:50.5px;top:349.4px;font-size:11.700px;line-height:20px;white-space:nowrap;color:#222;-webkit-text-stroke:.25px #222">专题专栏</div>
<svg style="left:14.2px;top:373.2px" width="12" height="12" viewBox="0 0 12 12"><circle cx="6" cy="6" r="6" fill="#747474"/><path d="M3 6H9M6 3V9" stroke="#fff" stroke-width="1.700"/></svg>
<svg style="left:32px;top:372.7px" width="14" height="13" viewBox="0 0 14 13"><path d="M2.2 6.500V1.400Q2.200 .6 3 .6H11Q11.800 .6 11.800 1.400V6.500Z" fill="#f6f6f6" stroke="#a8a8a8" stroke-width=".8"/><path d="M4.200 1.600V6M6 1.600V6M8 1.600V6M9.800 1.600V6" stroke="#b4b4b4" stroke-width=".8"/><path d="M.5 6.600L2 4.600V6.600H12V4.600L13.500 6.600V12.400H.5Z" fill="#f7eaa6" stroke="#dcbf55" stroke-width=".9" stroke-linejoin="round"/><path d="M1 8.200H13" stroke="#fdf6cf" stroke-width="1"/><circle cx="9.800" cy="6.600" r="2.200" fill="#333"/><path d="M6.200 13Q6.200 9.200 9.800 9.200T13.400 13Z" fill="#2f9fd6" stroke="#1b6f9f" stroke-width=".6"/></svg>
<div class="abs" style="left:50.5px;top:369.2px;font-size:11.700px;line-height:20px;white-space:nowrap;color:#222;-webkit-text-stroke:.25px #222">招商引资</div>
<svg style="left:14.2px;top:393px" width="12" height="12" viewBox="0 0 12 12"><circle cx="6" cy="6" r="6" fill="#747474"/><path d="M3 6H9M6 3V9" stroke="#fff" stroke-width="1.700"/></svg>
<svg style="left:32px;top:392.5px" width="14" height="13" viewBox="0 0 14 13"><path d="M2.2 6.500V1.400Q2.200 .6 3 .6H11Q11.800 .6 11.800 1.400V6.500Z" fill="#f6f6f6" stroke="#a8a8a8" stroke-width=".8"/><path d="M4.200 1.600V6M6 1.600V6M8 1.600V6M9.800 1.600V6" stroke="#b4b4b4" stroke-width=".8"/><path d="M.5 6.600L2 4.600V6.600H12V4.600L13.500 6.600V12.400H.5Z" fill="#f7eaa6" stroke="#dcbf55" stroke-width=".9" stroke-linejoin="round"/><path d="M1 8.200H13" stroke="#fdf6cf" stroke-width="1"/><rect x="6.200" y="8" width="7" height="5" fill="#f2b600" stroke="#b98900" stroke-width=".6"/><path d="M7.600 8V6.600Q7.600 4.800 9.700 4.800T11.800 6.600V8" fill="none" stroke="#999" stroke-width="1.100"/></svg>
<div class="abs" style="left:50.5px;top:389px;font-size:11.700px;line-height:20px;white-space:nowrap;color:#222;-webkit-text-stroke:.25px #222">文化旅游</div>
<svg style="left:14.2px;top:412.8px" width="12" height="12" viewBox="0 0 12 12"><circle cx="6" cy="6" r="6" fill="#747474"/><path d="M3 6H9M6 3V9" stroke="#fff" stroke-width="1.700"/></svg>
<svg style="left:32px;top:412.3px" width="14" height="13" viewBox="0 0 14 13"><path d="M2.600 .6H9L11.400 3V12.400H2.600Z" fill="#fff" stroke="#777" stroke-width=".9"/><path d="M4.600 5H9.400M4.600 7.200H9.400M4.600 9.400H9.400" stroke="#777" stroke-width=".9"/></svg>
<div class="abs" style="left:50.5px;top:408.8px;font-size:11.700px;line-height:20px;white-space:nowrap;color:#222;-webkit-text-stroke:.25px #222">网站相关</div>
<svg style="left:14.2px;top:432.6px" width="12" height="12" viewBox="0 0 12 12"><circle cx="6" cy="6" r="6" fill="#747474"/><path d="M3 6H9M6 3V9" stroke="#fff" stroke-width="1.700"/></svg>
<svg style="left:32px;top:432.1px" width="14" height="13" viewBox="0 0 14 13"><path d="M2.2 6.500V1.400Q2.200 .6 3 .6H11Q11.800 .6 11.800 1.400V6.500Z" fill="#f6f6f6" stroke="#a8a8a8" stroke-width=".8"/><path d="M4.200 1.600V6M6 1.600V6M8 1.600V6M9.800 1.600V6" stroke="#b4b4b4" stroke-width=".8"/><path d="M.5 6.600L2 4.600V6.600H12V4.600L13.500 6.600V12.400H.5Z" fill="#f7eaa6" stroke="#dcbf55" stroke-width=".9" stroke-linejoin="round"/><path d="M1 8.200H13" stroke="#fdf6cf" stroke-width="1"/></svg>
<div class="abs" style="left:50.5px;top:428.6px;font-size:11.700px;line-height:20px;white-space:nowrap;color:#222;-webkit-text-stroke:.25px #222">街镇</div>
<div class="rd" style="left:77.4px;top:431.6px"></div>
<svg style="left:32px;top:451.9px" width="14" height="13" viewBox="0 0 14 13"><path d="M.6 2.400Q.6 1.600 1.400 1.600H5L6.200 3H12.600Q13.400 3 13.400 3.800V12.400H.6Z" fill="#f3dd85" stroke="#d9bb4e" stroke-width=".9"/><path d="M.6 4.600H13.400V12.400H.6Z" fill="#faedb0" stroke="#d9bb4e" stroke-width=".9"/></svg>
<div class="abs" style="left:50.5px;top:448.4px;font-size:11.700px;line-height:20px;white-space:nowrap;color:#222;-webkit-text-stroke:.25px #222">档案</div>
</div>
<div id="main">
<div class="abs" style="left:14.3px;top:17px;width:677.7px;height:26.5px;border:1px solid #d9d9d9;border-radius:4px 0 0 4px;background:#f0f0f0"></div>
<div class="abs" style="left:25px;top:20px;font-size:10.800px;line-height:20px;color:#9a9a9a">标题</div>
<svg style="left:655.5px;top:21.7px" width="17" height="17" viewBox="0 0 17 17"><path d="M1.300 5.400A7.400 7.400 0 0 1 15 5.800" fill="none" stroke="#333" stroke-width="1.300"/><path d="M15.700 11.600A7.400 7.400 0 0 1 2 11.200" fill="none" stroke="#333" stroke-width="1.300"/><path d="M.4 3.800L2.600 5.800L.6 6.600Z" fill="#333"/><path d="M16.600 13.200L14.400 11.200L16.400 10.400Z" fill="#333"/><path d="M3.400 8.500Q5.800 5.200 8.500 5.200T13.600 8.500Q11.200 11.800 8.500 11.800T3.400 8.500Z" fill="#333"/><circle cx="8.500" cy="8.500" r="2" fill="#f0f0f0"/><circle cx="8.500" cy="8.500" r="1.100" fill="#333"/></svg>
<div class="abs" style="left:692.3px;top:17px;width:29.9px;height:26.5px;border:1px solid #d9d9d9;border-radius:4px;background:#f0f0f0;text-align:center;line-height:24px;font-family:'Liberation Serif',serif;font-size:14.500px;color:#333;"><span style="font-size:13.500px;border-bottom:1.300px solid #444;line-height:11px;height:12.300px;display:inline-block;padding:0 .5px;position:relative;top:-3px">A</span></div>
<div class="abs" style="left:722.5px;top:17px;width:30px;height:26.5px;border:1px solid #d9d9d9;border-radius:4px;background:#f0f0f0;text-align:center;line-height:24px;font-family:'Liberation Serif',serif;font-size:14.500px;color:#333;font-weight:normal">B</div>
<div class="abs" style="left:752.5px;top:17px;width:30px;height:26.5px;border:1px solid #d9d9d9;border-radius:4px;background:#f0f0f0;text-align:center;line-height:24px;font-family:'Liberation Serif',serif;font-size:14.500px;color:#333;font-style:italic">I</div>
<div class="abs" style="left:783px;top:17px;width:63px;height:26.5px;border-radius:4px;background:#6294be;color:#fff;text-align:center;line-height:26px;font-size:10.800px"><span class="b">完整标题</span></div>
<div class="abs" style="left:849px;top:17px;width:52px;height:26.5px;border-radius:4px;background:#6294be;color:#fff;text-align:center;line-height:26px;font-size:10.800px"><span class="b">副标题</span></div>
<div class="abs" style="left:14px;top:54px;width:886.8px;height:550px;border:1px solid #d9d9d9;border-radius:4px;background:#f0f0f0"></div>
<div class="abs" style="left:15.5px;top:88px;width:884.5px;height:1px;background:#d9d9d9"></div>
<div class="abs" style="left:15.5px;top:575px;width:884.5px;height:1px;background:#d4d4d4"></div>
<svg style="left:25px;top:66.5px" width="13" height="13" viewBox="0 0 13 13"><circle cx="6.500" cy="6.500" r="6.500" fill="#4cb874"/><path d="M3 6.500H10M6.500 3V10" stroke="#fff" stroke-width="2"/></svg>
<div class="abs" style="left:43.3px;top:71.7px;width:0;height:0;border:3.200px solid transparent;border-top:3.600px solid #2a2a2a;border-bottom:0"></div>
<div class="abs" style="left:56px;top:65px;width:1px;height:16px;background:#cfcfcf"></div>
<svg style="left:67px;top:67px" width="12" height="12" viewBox="0 0 12 12"><path d="M4 4.600Q7.400 2 9.400 4.600Q11.200 7.600 7.400 11.600" fill="none" stroke="#4a8fdc" stroke-width="2.300"/><path d="M.6 1.200L6.600 2.400L1.800 7.400Z" fill="#4a8fdc"/></svg>
<svg style="left:90.5px;top:67px" width="12" height="12" viewBox="0 0 12 12"><path d="M8 4.600Q4.600 2 2.600 4.600Q.8 7.600 4.600 11.600" fill="none" stroke="#c3daf0" stroke-width="2.300"/><path d="M11.400 1.200L5.400 2.400L10.200 7.400Z" fill="#c3daf0"/></svg>
<svg style="left:113px;top:66px" width="14" height="14" viewBox="0 0 14 14"><path d="M10.800 .4L13.400 2.400L10.200 6.200L7.800 4.200Z" fill="#b98245"/><path d="M7.200 4L10.400 6.800L9.600 7.800L6.400 5Z" fill="#9aa0a8"/><path d="M6.200 5L9.600 8Q9.800 10.600 7.600 12.600L5.800 12L4.600 13.200L3.800 11.400L2 11L.4 8.200Q4 8 6.200 5Z" fill="#e0b26a" stroke="#b98245" stroke-width=".5"/><path d="M3.400 9.400L6 11.600M5 7.800L7.800 10.200" stroke="#b98245" stroke-width=".5"/></svg>
<svg style="left:135.5px;top:66px" width="16" height="14" viewBox="0 0 16 14"><path d="M9.400 .6L15.400 4.400L7 12.600L1 8.800Z" fill="#f7f7f7" stroke="#aaa" stroke-width=".7"/><path d="M9.400 .6L15.400 4.400L12 7.800L6 4Z" fill="#7aaaea"/><path d="M1 8.800L7 12.600V13.800L1 10Z" fill="#c4c4c4"/></svg>
<div class="abs" style="left:158px;top:65px;width:1px;height:16px;background:#cfcfcf"></div>
<div class="abs" style="left:164px;top:63px;width:76.5px;height:20px;border:1px solid #cdcdcd;border-radius:2px;background:#f0f0f0"></div><div class="abs" style="left:228.5px;top:63px;width:1px;height:20px;background:#cdcdcd"></div><div class="abs" style="left:170px;top:63px;font-size:10.800px;line-height:20px;color:#333;white-space:nowrap;overflow:hidden;width:55px">正文</div><div class="abs" style="left:231.8px;top:71.7px;width:0;height:0;border:3.200px solid transparent;border-top:3.600px solid #2a2a2a;border-bottom:0"></div>
<div class="abs" style="left:244px;top:63px;width:52px;height:20px;border:1px solid #cdcdcd;border-radius:2px;background:#f0f0f0"></div><div class="abs" style="left:283.5px;top:63px;width:1px;height:20px;background:#cdcdcd"></div><div class="abs" style="left:250px;top:63px;font-size:10.800px;line-height:20px;color:#333;white-space:nowrap;overflow:hidden;width:30px">微软雅黑</div><div class="abs" style="left:287.05px;top:71.7px;width:0;height:0;border:3.200px solid transparent;border-top:3.600px solid #2a2a2a;border-bottom:0"></div>
<div class="abs" style="left:299px;top:63px;width:52px;height:20px;border:1px solid #cdcdcd;border-radius:2px;background:#f0f0f0"></div><div class="abs" style="left:338.5px;top:63px;width:1px;height:20px;background:#cdcdcd"></div><div class="abs" style="left:305px;top:63px;font-size:10.800px;line-height:20px;color:#333;white-space:nowrap;overflow:hidden;width:30px">小四</div><div class="abs" style="left:342.05px;top:71.7px;width:0;height:0;border:3.200px solid transparent;border-top:3.600px solid #2a2a2a;border-bottom:0"></div>
<div class="abs" style="left:355.5px;top:63px;width:20px;text-align:center;font-family:'Liberation Serif',serif;line-height:20px;color:#333;font-size:14px;font-weight:bold;color:#5a5a5a">B</div>
<div class="abs" style="left:378px;top:63px;width:20px;text-align:center;font-family:'Liberation Serif',serif;line-height:20px;color:#333;font-size:14.500px;font-style:italic;color:#5a5a5a;font-weight:bold">I</div>
<div class="abs" style="left:402px;top:63px;width:20px;text-align:center;font-family:'Liberation Serif',serif;line-height:20px;color:#333;font-size:14px;text-decoration:underline;color:#5a5a5a">U</div>
<div class="abs" style="left:425.5px;top:63px;width:20px;text-align:center;font-family:'Liberation Serif',serif;line-height:20px;color:#333;font-size:8.500px;text-decoration:line-through;letter-spacing:-.3px;color:#5a5a5a">ABC</div>
<div class="abs" style="left:450px;top:65px;width:1px;height:16px;background:#cfcfcf"></div>
<div class="abs" style="left:457px;top:63px;width:20px;text-align:center;font-family:'Liberation Serif',serif;line-height:20px;color:#333;font-size:15.500px;color:#5a5a5a">A</div>
<div class="abs" style="left:478.3px;top:71.7px;width:0;height:0;border:3.200px solid transparent;border-top:3.600px solid #2a2a2a;border-bottom:0"></div>
<div class="abs" style="left:492.5px;top:67px;font-size:8.500px;line-height:9px;height:9px;color:#444;background:#f6cf8f;font-family:'Liberation Sans',sans-serif">ab</div>
<svg style="left:498.5px;top:69px" width="9" height="10" viewBox="0 0 9 10"><path d="M1 7.400L6 1.600L7.600 3L2.600 8.800L.6 9.400Z" fill="#d9a35a"/><path d="M6 1.600L7 .4L8.600 1.800L7.600 3Z" fill="#e0453a"/></svg>
<div class="abs" style="left:510.3px;top:71.7px;width:0;height:0;border:3.200px solid transparent;border-top:3.600px solid #2a2a2a;border-bottom:0"></div>
<svg style="left:525.8px;top:67.8px" width="12.4" height="10.4" viewBox="0 0 12.4 10.4"><path d="M0 .6H12.400M0 2.900H8.400M0 5.200H12.400M0 7.500H8.400M0 9.800H10.400" stroke="#777" stroke-width="1.100"/></svg>
<div class="abs" style="left:542.8px;top:71.7px;width:0;height:0;border:3.200px solid transparent;border-top:3.600px solid #2a2a2a;border-bottom:0"></div>
<div class="abs" style="left:556px;top:65px;width:1px;height:16px;background:#cfcfcf"></div>
<svg style="left:567.3px;top:67.8px" width="11.4" height="10.4" viewBox="0 0 11.4 10.4"><path d="M0 .6H10.600M0 2.900H8M0 5.200H8M0 7.500H8M3 9.800H10.600" stroke="#333" stroke-width="1.100"/><path d="M8.800 3.400L11.400 5.200L8.800 7Z" fill="#3d6fd0"/></svg>
<svg style="left:590px;top:67px" width="13" height="12" viewBox="0 0 13 12"><path d="M4.600 1.600H13M4.600 6H13M4.600 10.400H13" stroke="#888" stroke-width="1.300"/><path d="M1.200 0V3M1.200 4.500V7.500M1.200 9V12" stroke="#4a74e0" stroke-width="1.500" stroke-dasharray="1 .5"/></svg>
<div class="abs" style="left:607.3px;top:71.7px;width:0;height:0;border:3.200px solid transparent;border-top:3.600px solid #2a2a2a;border-bottom:0"></div>
<svg style="left:622px;top:67px" width="13" height="12" viewBox="0 0 13 12"><path d="M4.600 1.600H13M4.600 6H13M4.600 10.400H13" stroke="#888" stroke-width="1.300"/><circle cx="1.400" cy="1.600" r="1.300" fill="#4a74e0"/><circle cx="1.400" cy="6" r="1.300" fill="#4a74e0"/><circle cx="1.400" cy="10.400" r="1.300" fill="#4a74e0"/></svg>
<div class="abs" style="left:639.3px;top:71.7px;width:0;height:0;border:3.200px solid transparent;border-top:3.600px solid #2a2a2a;border-bottom:0"></div>
<div class="abs" style="left:652.5px;top:65px;width:1px;height:16px;background:#cfcfcf"></div>
<svg style="left:662.3px;top:66.5px" width="13" height="13" viewBox="0 0 13 13"><rect x=".6" y=".6" width="11.800" height="11.800" fill="#fff" stroke="#3a7bd0" stroke-width="1.200"/><path d="M2.600 3.600L4.200 9.600L6.500 4.600L8.800 9.600L10.400 3.600" fill="none" stroke="#2f6fc6" stroke-width="1.500"/></svg>
<svg style="left:686.5px;top:66px" width="13" height="14" viewBox="0 0 13 14"><rect x=".6" y="1.600" width="10" height="11.200" rx="1" fill="#b98b55" stroke="#8a6233" stroke-width=".8"/><rect x="3.200" y=".2" width="5" height="2.600" rx=".8" fill="#777"/><rect x="4.200" y="5.200" width="8.400" height="8.200" fill="#f4f4f4" stroke="#777" stroke-width=".8"/><path d="M6 7H10.800M8.400 7V12" stroke="#333" stroke-width="1.400"/></svg>
<svg style="left:709px;top:69.7px" width="14" height="6.6" viewBox="0 0 14 6.6"><rect x=".6" y=".8" width="7.600" height="5" rx="2.500" fill="none" stroke="#888" stroke-width="1.300"/><rect x="5.800" y=".8" width="7.600" height="5" rx="2.500" fill="none" stroke="#888" stroke-width="1.300"/></svg>
<div class="abs" style="left:727.3px;top:71.7px;width:0;height:0;border:3.200px solid transparent;border-top:3.600px solid #2a2a2a;border-bottom:0"></div>
<svg style="left:741.5px;top:66px" width="14" height="14" viewBox="0 0 14 14"><path d="M3.600 12.400L4.400 9.600L10.400 3.600L12.400 5.600L6.400 11.600Z" fill="#ecc766" stroke="#b8902f" stroke-width=".5"/><path d="M10.400 3.600L11.400 2.600L13.400 4.600L12.400 5.600Z" fill="#e8697a"/><path d="M3.600 12.400L4.400 9.600L6.400 11.600Z" fill="#8a7a5a"/><path d="M6 .2L6.700 1.900L8.400 2.200L7.100 3.300L7.500 5L6 4.100L4.500 5L4.900 3.300L3.600 2.200L5.300 1.900Z" fill="#e8773a"/><path d="M2.400 4.600L3 6L4.500 6.200L3.400 7.200L3.700 8.700L2.400 7.900L1.100 8.700L1.400 7.200L.3 6.200L1.800 6Z" fill="#e8773a"/><circle cx="9.200" cy="1.400" r=".8" fill="#e8773a"/></svg>
<div class="abs" style="left:759.3px;top:71.7px;width:0;height:0;border:3.200px solid transparent;border-top:3.600px solid #2a2a2a;border-bottom:0"></div>
<svg style="left:774px;top:67px" width="14" height="12" viewBox="0 0 14 12"><rect x=".5" y=".5" width="13" height="11" fill="#e4edf6" stroke="#9db4cc" stroke-width="1"/><rect x="2" y="2" width="4.600" height="3.200" fill="#5a9ad6"/><rect x="2" y="6.200" width="4.600" height="3.800" fill="#5a9ad6"/><rect x="7.800" y="2" width="4.200" height="8" fill="#5a9ad6"/></svg>
<div class="abs" style="left:796px;top:66px;width:15px;height:14.5px;border:1px solid #cf6f6f;background:#f3dede;color:#c75c5c;font-size:12px;line-height:13px;text-align:center;overflow:hidden">错</div>
<svg style="left:820.8px;top:68.9px" width="8" height="7.2" viewBox="0 0 8 7.2"><path d="M.6 .6L4 3.400L7.400 .6M.6 3.800L4 6.600L7.400 3.800" fill="none" stroke="#6a6055" stroke-width="1"/></svg>
<svg style="left:837px;top:67px" width="13" height="13" viewBox="0 0 13 13"><path d="M7 11.400H.6V.6H11.400V5" fill="none" stroke="#5a9be8" stroke-width="1"/><circle cx="6.800" cy="6.600" r="3.100" fill="#d6ecf8" stroke="#e07a3f" stroke-width="1.200"/><path d="M9.200 9L12.200 12" stroke="#e07a3f" stroke-width="1.500"/></svg>
<div class="abs" style="left:853.5px;top:63.3px;width:20px;text-align:center;font-family:'Liberation Serif',serif;font-size:16.500px;line-height:20px;color:#f0b15a;font-weight:bold">A</div>
<svg style="left:878px;top:66.5px" width="14" height="13" viewBox="0 0 14 13"><rect x=".6" y=".6" width="12.800" height="9.400" rx=".8" fill="#dfe3ee" stroke="#9aa0b4" stroke-width="1"/><rect x="2.200" y="2.200" width="9.600" height="6.200" fill="#4f68d6"/><path d="M2.200 4.200H11.800M2.200 6.300H11.800" stroke="#7d90e4" stroke-width=".6"/><path d="M5.400 11H8.600M3 12.400H11" stroke="#8a8fa3" stroke-width="1"/></svg>
<svg style="left:33.3px;top:582.9px" width="10.4" height="12.8" viewBox="0 0 10.4 12.8"><rect x=".5" y=".5" width="9" height="11" fill="#f6f6f6" stroke="#888" stroke-width="1"/><path d="M2.600 3.500H7M2.600 5.500H7M2.600 7.500H5.600" stroke="#888" stroke-width=".9"/></svg>
<svg style="left:61px;top:583.3px" width="12" height="12.4" viewBox="0 0 12 12.4"><path d="M.8 .4V4.400M11.200 .4V4.400M.8 3.400H11.200M.8 12V8M11.200 12V8M.8 9H11.200" fill="none" stroke="#555" stroke-width="1.100"/><path d="M0 6.200H12" stroke="#777" stroke-width="1" stroke-dasharray="1.500 1"/></svg>
<div class="abs" style="left:91.5px;top:578.7px;font-size:10.800px;line-height:20px;color:#999;white-space:nowrap"><span style="font-family:'Liberation Serif',serif;font-size:11.500px">0</span> 个字符</div>
<div class="abs" style="left:768px;top:578.5px;font-size:10.800px;line-height:20px;color:#333;white-space:nowrap">页面宽度:</div>
<div class="abs" style="left:822px;top:579.5px;width:57.5px;height:19px;border:1px solid #d6d6d6;background:#f0f0f0;color:#999;font-size:10.800px;line-height:17px;padding-left:4.500px;font-family:'Liberation Sans',sans-serif">100%</div>
<svg style="left:865.5px;top:586.8px" width="9" height="5.4" viewBox="0 0 9 5.4"><path d="M.8 .8L4.500 4.400L8.200 .8" fill="none" stroke="#555" stroke-width="1.600"/></svg>
<div class="abs" style="left:0px;top:617px;width:914px;height:1px;background:#ebebeb"></div>
<div class="abs" style="left:0px;top:618px;width:914px;height:58px;background:#efefef"></div>
<div class="abs" style="left:169.5px;top:633.5px;width:54.5px;height:26.5px;border-radius:3.500px;background:#6193bf;color:#fff;font-size:10.800px;line-height:25.400px;text-align:center;white-space:nowrap;"><svg style="position:relative;display:inline-block;vertical-align:-1.500px;margin-right:2.500px" width="10" height="10" viewBox="0 0 10 10"><path fill-rule="evenodd" d="M.8 0H7.800L10 2.200V9.200Q10 10 9.200 10H.8Q0 10 0 9.200V.8Q0 0 .8 0ZM2.200 1.200V3.600H6.800V1.200ZM2 6V8.800H8V6Z" fill="#fff"/><path d="M5.200 1.600V3.200" stroke="#fff" stroke-width="1"/></svg><span class="b">保存</span></div>
<div class="abs" style="left:228px;top:633.5px;width:74px;height:26.5px;border-radius:3.500px;background:#7fc4dc;color:#fff;font-size:10.800px;line-height:25.400px;text-align:center;white-space:nowrap;"><span class="b">保存并审核</span></div>
<div class="abs" style="left:307px;top:633.5px;width:95px;height:26.5px;border-radius:3.500px;background:#80c080;color:#fff;font-size:10.800px;line-height:25.400px;text-align:center;white-space:nowrap;"><span class="b">终审通过并发布</span></div>
<div class="abs" style="left:407px;top:633.5px;width:131px;height:26.5px;border-radius:3.500px;background:#80c080;color:#fff;font-size:10.800px;line-height:25.400px;text-align:center;white-space:nowrap;"><svg style="position:relative;display:inline-block;vertical-align:-2px;margin-right:2px" width="11" height="11" viewBox="0 0 11 11"><circle cx="5.500" cy="5.500" r="4.700" fill="none" stroke="#fff" stroke-width="1.100"/><path d="M5.500 2.600V5.800H8" fill="none" stroke="#fff" stroke-width="1.100"/></svg><span class="b">终审通过并定时发布</span></div>
<div class="abs" style="left:542px;top:633.5px;width:64px;height:26.5px;border-radius:3.500px;background:#7fc4dc;color:#fff;font-size:10.800px;line-height:25.400px;text-align:center;white-space:nowrap;"><svg style="position:relative;display:inline-block;vertical-align:-1.500px;margin-right:3px" width="10" height="10" viewBox="0 0 10 10"><path d="M.6 .6H7.600L9.400 2.400V9.400H.6Z" fill="none" stroke="#fff" stroke-width="1.100"/><path d="M2.600 .8V3.400H6.600V.8M2.400 9.200V6H7.600V9.200" fill="none" stroke="#fff" stroke-width="1"/></svg><span style="-webkit-text-stroke:.35px #fff">存草稿</span></div>
<div class="abs" style="left:611px;top:633.5px;width:76px;height:26.5px;border-radius:3.500px;background:#7fc4dc;color:#fff;font-size:10.800px;line-height:25.400px;text-align:center;white-space:nowrap;"><svg style="position:relative;display:inline-block;vertical-align:-2px;margin-right:3px" width="12" height="11" viewBox="0 0 12 11"><rect x=".6" y=".6" width="9" height="6.600" fill="none" stroke="#fff" stroke-width="1.200"/><path d="M2.200 3H7" stroke="#fff" stroke-width="1"/><circle cx="8" cy="7" r="2.200" fill="#7ec3dc" stroke="#fff" stroke-width="1.200"/><path d="M9.600 8.600L11.400 10.400" stroke="#fff" stroke-width="1.400"/></svg><span style="-webkit-text-stroke:.35px #fff">前台预览</span></div>
<div class="abs" style="left:692px;top:633px;width:54px;height:27.5px;border:1px solid #d8d8d8;border-radius:3.500px;background:#f2f2f2;color:#333;font-size:10.800px;line-height:25px;text-align:center;white-space:nowrap"><svg style="position:relative;display:inline-block;vertical-align:-.8px;margin-right:3px" width="10" height="10" viewBox="0 0 10 10"><path d="M2.400 3.400A3.800 3.800 0 1 1 1.600 7" fill="none" stroke="#333" stroke-width="1.300"/><path d="M.6 1L1 4.600L4.400 3.600Z" fill="#333"/></svg><span class="b">重置</span></div>
</div>
<div class="abs" style="left:1283px;top:36px;width:16px;height:676px;background:#f0f0f0"></div>
<div class="abs" style="left:1285px;top:51px;width:12px;height:264px;background:#c0c0c0"></div>
<div class="abs" style="left:1287.500px;top:42px;width:0;height:0;border:3.500px solid transparent;border-bottom:4px solid #9b9b9b;border-top:0"></div>
<div class="abs" style="left:1287.500px;top:703px;width:0;height:0;border:3.500px solid transparent;border-top:4px solid #444;border-bottom:0"></div>
<div id="dlg" style="position:absolute;left:519px;top:157px;width:634.500px;height:412.500px;background:#fff;border:1px solid #b3b3b3;border-radius:5px;box-shadow:1px 3px 10px rgba(0,0,0,.26)">
 <div class="abs" style="left:0;top:0;width:632.500px;height:25px;border-radius:4px 4px 0 0;background:linear-gradient(#fff,#fbfbfb 45%,#ebebeb);border-bottom:1px solid #c6c6c6"></div>
 <div class="abs b" style="left:5.500px;top:3px;font-size:10.800px;line-height:20px;color:#222;white-space:nowrap">导入音频</div>
 <svg style="left:609px;top:4px" width="16" height="16" viewBox="0 0 16 16"><circle cx="8" cy="8" r="7.300" fill="#fff" stroke="#b5b5b5" stroke-width="1"/><path d="M5.200 5.200L10.800 10.800M10.800 5.200L5.200 10.800" stroke="#333" stroke-width="1.900"/></svg>
 <!-- tabs -->
 <div class="abs" style="left:1.500px;top:69px;width:628px;height:1px;background:#ddd"></div>
 <div class="abs" style="left:.5px;top:38.500px;width:66px;height:31.500px;border:1px solid #ddd;border-bottom:1px solid #fff;border-radius:4px 4px 0 0;background:#fff"></div>
 <div class="abs" style="left:13px;top:43px;font-size:10.800px;line-height:20px;color:#555;-webkit-text-stroke:.25px #555;white-space:nowrap">导入音频</div>
 <div class="abs" style="left:81.500px;top:43px;font-size:10.800px;line-height:20px;color:#337ab7;-webkit-text-stroke:.25px #337ab7;white-space:nowrap">从已上传音频选择</div>
 <div class="abs" style="left:193px;top:43px;font-size:10.800px;line-height:20px;color:#337ab7;-webkit-text-stroke:.25px #337ab7;white-space:nowrap">从素材库中选择</div>
 <!-- upload box -->
 <div class="abs" style="left:240px;top:120px;width:149px;height:149px;border:2px dashed #dcdcdc"></div>
 <svg style="left:276px;top:149px" width="76" height="91" viewBox="0 0 76 91">
  <defs><linearGradient id="mg" x1="0" y1="0" x2="0" y2="1"><stop offset="0" stop-color="#fb5a6c"/><stop offset="1" stop-color="#e5475a"/></linearGradient></defs>
  <path d="M4 0H49L76 26V87Q76 91 72 91H4Q0 91 0 87V4Q0 0 4 0Z" fill="url(#mg)"/>
  <path d="M49 0L76 26H54Q49 26 49 21Z" fill="#fdb3bb"/>
  <path d="M28.200 37L50.400 30.600V63.500" fill="none" stroke="#fff" stroke-width="3.400" stroke-linejoin="round"/>
  <path d="M28.200 37V69.500" fill="none" stroke="#fff" stroke-width="3.400"/>
  <path d="M28.200 44.800L50.400 38.400" stroke="#fff" stroke-width="3.600"/>
  <ellipse cx="22.600" cy="69.600" rx="7.600" ry="6" fill="#fff" transform="rotate(-20 22.600 69.600)"/>
  <ellipse cx="44.800" cy="63.400" rx="7.600" ry="6" fill="#fff" transform="rotate(-20 44.800 63.400)"/>
 </svg>
 <div class="abs" style="left:246.500px;top:243px;width:135.500px;height:18.500px;background:#666;color:#fff;font-size:10.800px;line-height:18.500px;text-align:center;font-family:'Liberation Sans',sans-serif;white-space:nowrap">202303311103343736.mp3</div>
 <!-- buttons -->
 <div class="abs" style="left:440.500px;top:372.500px;width:85px;height:21.500px;border:1px solid #cfcfcf;border-radius:5px;background:linear-gradient(#fff,#f4f4f4);font-size:12.600px;line-height:20px;text-align:center;color:#222;-webkit-text-stroke:.2px #222">确定</div>
 <div class="abs" style="left:536px;top:372.500px;width:85px;height:21.500px;border:1px solid #cfcfcf;border-radius:5px;background:linear-gradient(#fff,#f4f4f4);font-size:12.600px;line-height:20px;text-align:center;color:#222;-webkit-text-stroke:.2px #222">取消</div>
</div>

</body>
</html>
